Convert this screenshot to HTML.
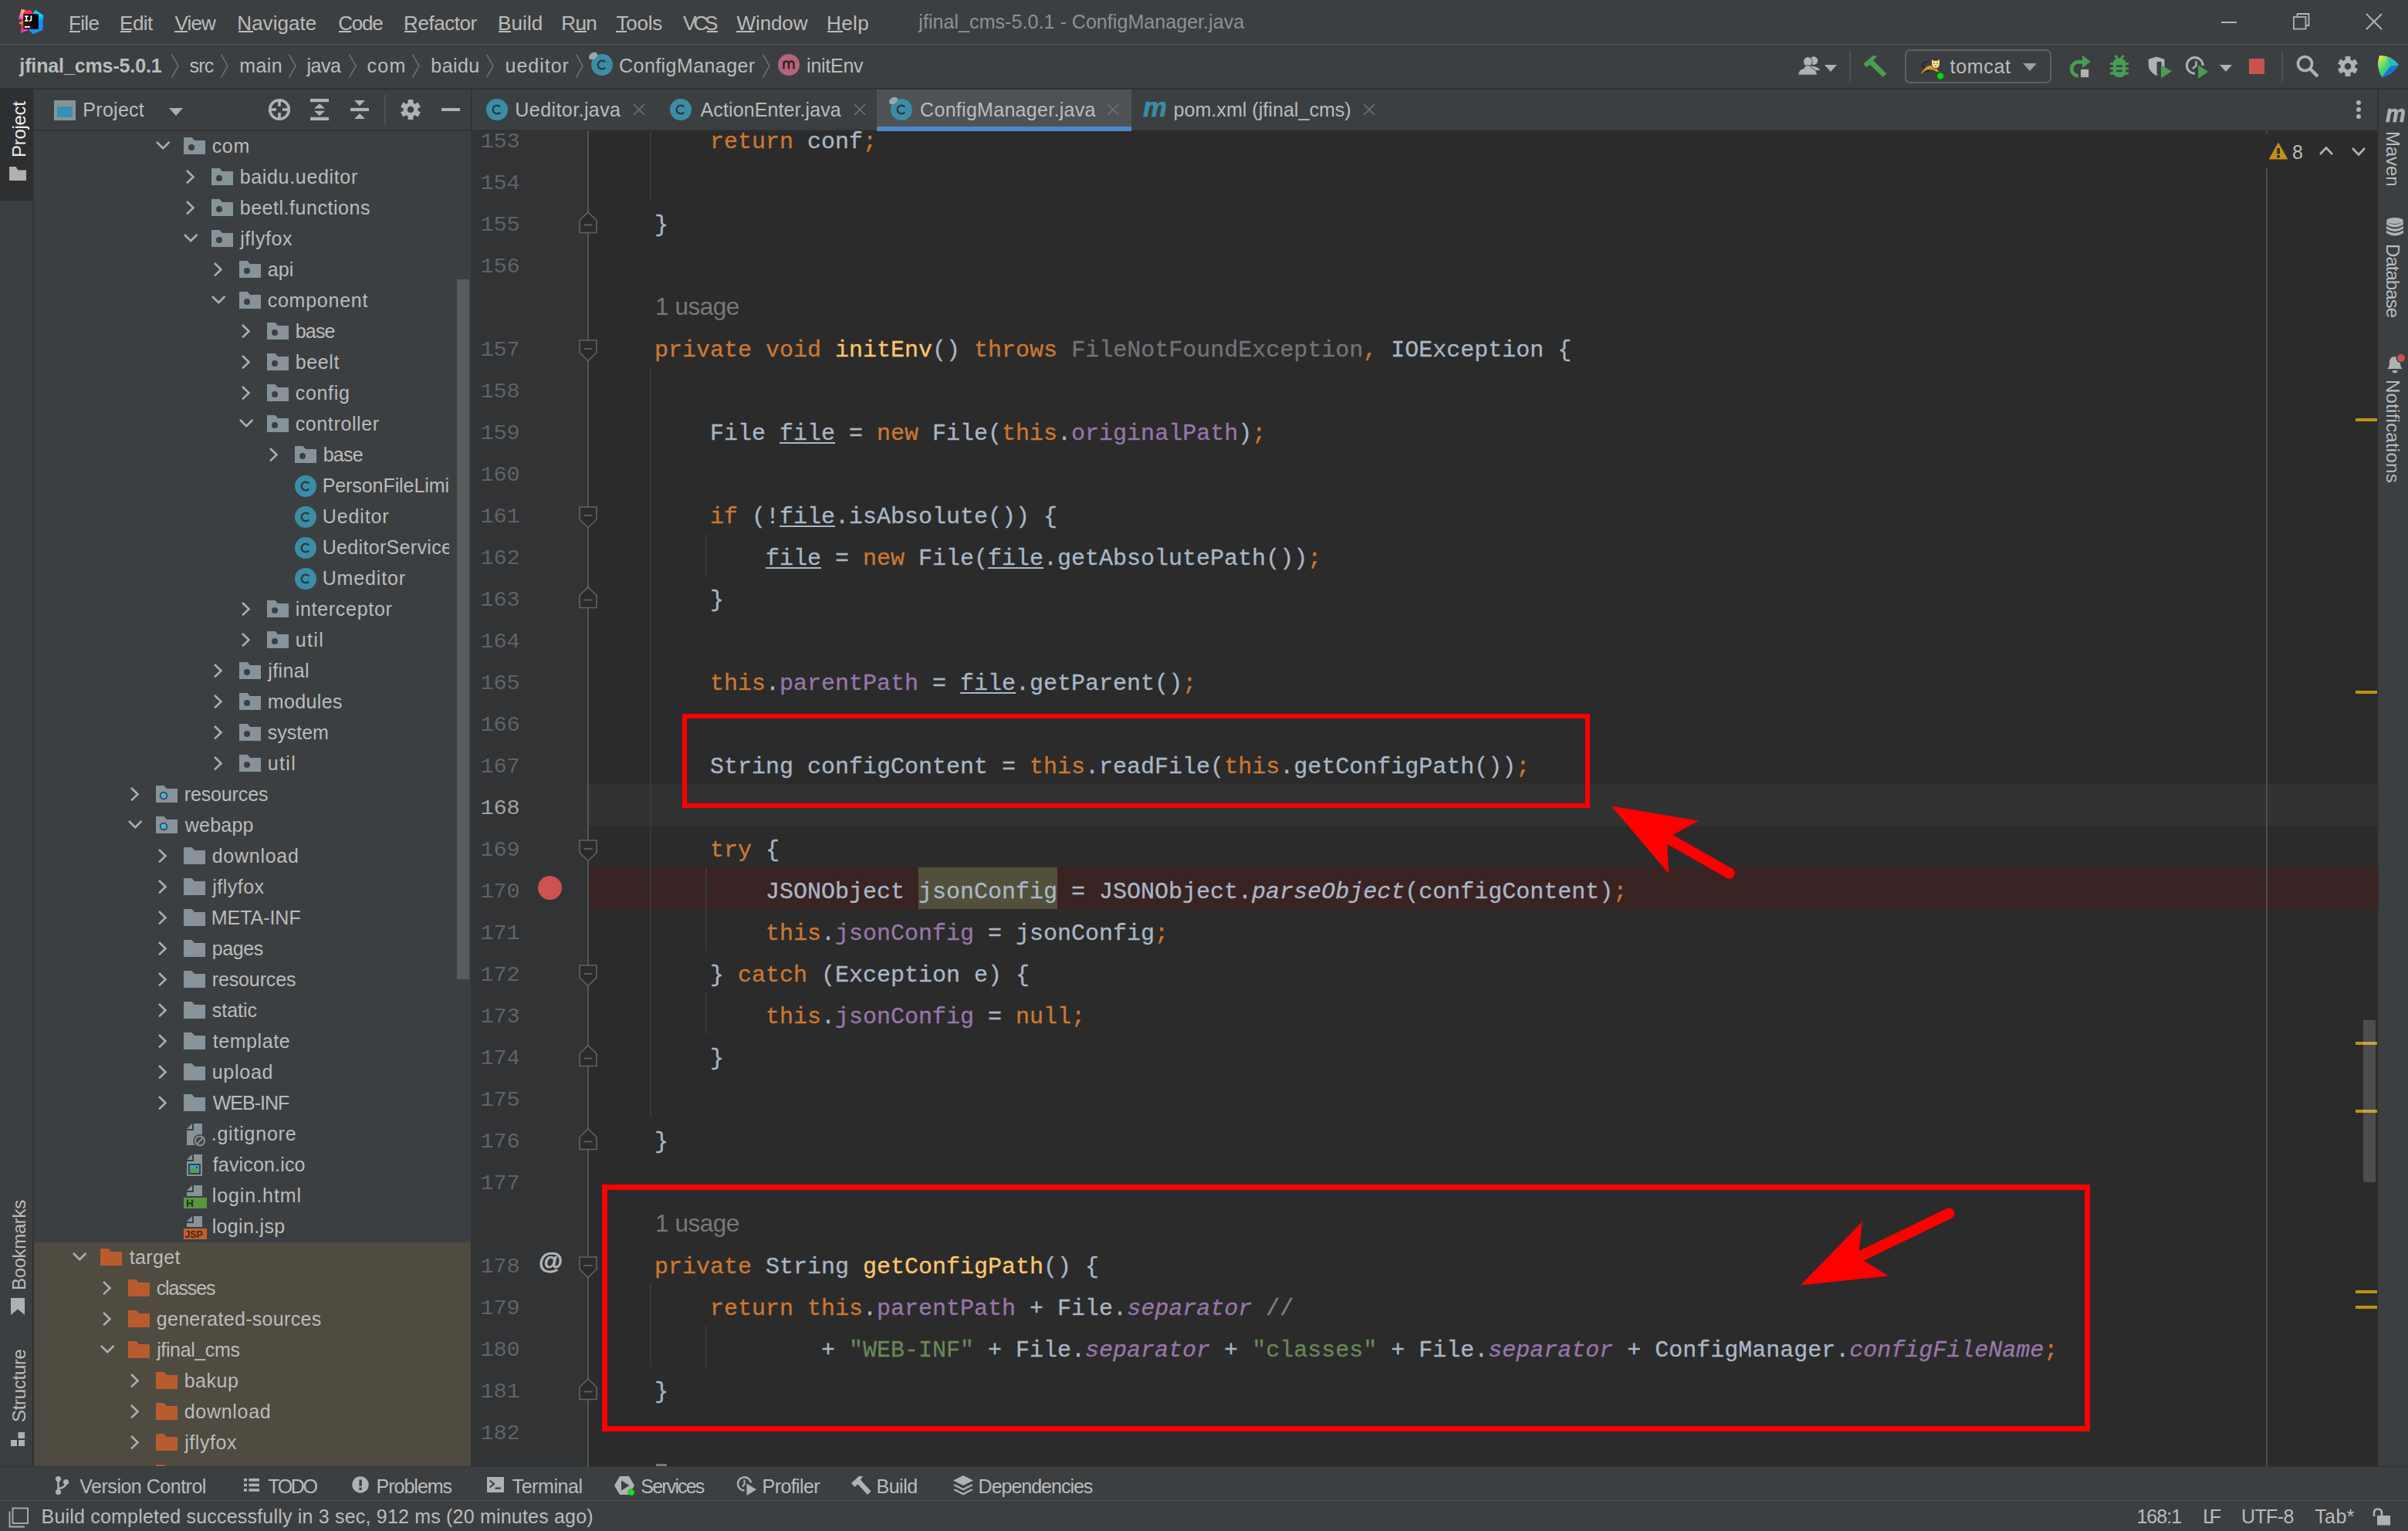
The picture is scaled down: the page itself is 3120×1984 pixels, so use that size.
<!DOCTYPE html><html><head><meta charset="utf-8"><title>jfinal_cms-5.0.1 - ConfigManager.java</title>
<style>
html,body{margin:0;padding:0;font-family:"Liberation Sans",sans-serif;}
body{width:3120px;height:1984px;overflow:hidden;background:#3c3f41;position:relative;font-family:"Liberation Sans",sans-serif;}
.r{position:absolute;display:block;}
.t{position:absolute;white-space:pre;font-family:"Liberation Sans",sans-serif;}
.c{position:absolute;white-space:pre;font-family:"Liberation Mono",monospace;font-size:30px;line-height:34px;color:#a9b7c6;left:776px;-webkit-text-stroke:0.3px;}
.k{color:#cc7832}.f{color:#9876aa}.m{color:#ffc66d}.s{color:#6a8759}.g{color:#808080}.u{color:#72737a}
.i{font-style:italic}.ul{text-decoration:underline;text-decoration-thickness:2px;text-underline-offset:2.5px}
.ln{position:absolute;font-family:"Liberation Mono",monospace;white-space:pre;}
</style></head><body>
<div class="r" style="left:0px;top:57px;width:3120px;height:1px;background:#545657;"></div>
<div class="r" style="left:0px;top:114px;width:3120px;height:2px;background:#2f3133;"></div>
<div class="r" style="left:0px;top:115px;width:42px;height:145px;background:#2d2f30;"></div>
<div class="r" style="left:42px;top:116px;width:2px;height:1785px;background:#323232;"></div>
<div class="r" style="left:44px;top:168px;width:566px;height:2px;background:#323232;"></div>
<div class="r" style="left:610px;top:170px;width:2471px;height:1731px;background:#2b2b2b;"></div>
<div class="r" style="left:610px;top:170px;width:152px;height:1731px;background:#313335;"></div>
<div class="r" style="left:610px;top:116px;width:2px;height:54px;background:#323232;"></div>
<div class="r" style="left:611px;top:168px;width:2470px;height:2px;background:#323232;"></div>
<div class="r" style="left:3080px;top:116px;width:2px;height:1785px;background:#323232;"></div>
<div class="r" style="left:0px;top:1900px;width:3120px;height:1px;background:#323232;"></div>
<div class="r" style="left:0px;top:1944px;width:3120px;height:1px;background:#4b4d4f;"></div>
<svg class="r" style="left:24px;top:11px;" width="33" height="34" viewBox="0 0 33 34"><defs>
<linearGradient id="lg1" x1="0.6" y1="0" x2="0.2" y2="1"><stop offset="0" stop-color="#ffd02e"/><stop offset="0.45" stop-color="#ff8fb0"/><stop offset="1" stop-color="#ff2fd0"/></linearGradient>
<linearGradient id="lg2" x1="0" y1="0" x2="0.4" y2="1"><stop offset="0" stop-color="#ffc400"/><stop offset="1" stop-color="#ff4a1c"/></linearGradient>
<linearGradient id="lg3" x1="0" y1="0" x2="1" y2="0.6"><stop offset="0" stop-color="#ff4536"/><stop offset="0.6" stop-color="#ff2bb5"/><stop offset="1" stop-color="#b44dff"/></linearGradient>
<linearGradient id="lg4" x1="0.5" y1="0" x2="0.5" y2="1"><stop offset="0" stop-color="#00d4ff"/><stop offset="0.25" stop-color="#08c8ff"/><stop offset="0.5" stop-color="#1488ff"/><stop offset="1" stop-color="#0aa0f0"/></linearGradient>
<linearGradient id="lg5" x1="0" y1="1" x2="1" y2="0"><stop offset="0" stop-color="#3a1c0a"/><stop offset="0.45" stop-color="#16060c"/><stop offset="1" stop-color="#000"/></linearGradient></defs>
<g transform="translate(0,0.5)"><path d="M3.9,0.2 L8.9,1.7 L8,7 L6.2,14.6 L0,12.7 Z" fill="url(#lg1)"/>
<path d="M8.9,1.7 L15.9,1.7 L18.9,5.9 L18,8 L6.2,8 L7,4 Z" fill="#ff2a6a"/>
<path d="M0.4,18.4 L6.2,14.6 L7,23 L4.6,21.5 Z" fill="url(#lg2)"/>
<path d="M4.6,21.2 L7,20 L7,25 L13.2,27.4 L2.4,31.4 Z" fill="url(#lg3)"/>
<path d="M18.9,5.9 L21.6,1.2 L32.1,8.4 L31.3,27.4 L18.9,32.6 L13.2,27.4 L20,20 Z" fill="url(#lg4)"/>
<path d="M21.6,1.2 L32.1,8.4 L26,10 Z" fill="#10e0ff" opacity="0.7"/>
<rect x="6.2" y="6.7" width="19.7" height="19.6" fill="url(#lg5)"/>
<rect x="7.9" y="22.4" width="7" height="1.9" fill="#fff"/>
<path d="M8,9.6 h4.6 M10.3,9.6 v5.8 M8,15.4 h4.6" stroke="#fff" stroke-width="1.7" fill="none"/><path d="M16.4,8.8 v4.6 q0,2.1 -2.2,2.1 h-0.6" stroke="#fff" stroke-width="1.7" fill="none"/></g></svg>
<span class="t" style="left:89.10px;top:14.80px;font-size:26px;line-height:30px;color:#bbbbbb;letter-spacing:-0.700px;">File</span>
<div class="r" style="left:90px;top:40px;width:14px;height:2px;background:#bbbbbb;"></div>
<span class="t" style="left:155.10px;top:14.80px;font-size:26px;line-height:30px;color:#bbbbbb;letter-spacing:-0.533px;">Edit</span>
<div class="r" style="left:156px;top:40px;width:14px;height:2px;background:#bbbbbb;"></div>
<span class="t" style="left:226.60px;top:14.80px;font-size:26px;line-height:30px;color:#bbbbbb;letter-spacing:-0.867px;">View</span>
<div class="r" style="left:226px;top:40px;width:17px;height:2px;background:#bbbbbb;"></div>
<span class="t" style="left:307.35px;top:14.80px;font-size:26px;line-height:30px;color:#bbbbbb;letter-spacing:0.021px;">Navigate</span>
<div class="r" style="left:309px;top:40px;width:19px;height:2px;background:#bbbbbb;"></div>
<span class="t" style="left:438.35px;top:14.80px;font-size:26px;line-height:30px;color:#bbbbbb;letter-spacing:-1.283px;">Code</span>
<div class="r" style="left:439px;top:40px;width:16px;height:2px;background:#bbbbbb;"></div>
<span class="t" style="left:523.10px;top:14.80px;font-size:26px;line-height:30px;color:#bbbbbb;letter-spacing:-0.443px;">Refactor</span>
<div class="r" style="left:524px;top:40px;width:16px;height:2px;background:#bbbbbb;"></div>
<span class="t" style="left:645.10px;top:14.80px;font-size:26px;line-height:30px;color:#bbbbbb;letter-spacing:0.100px;">Build</span>
<div class="r" style="left:646px;top:40px;width:16px;height:2px;background:#bbbbbb;"></div>
<span class="t" style="left:727.35px;top:14.80px;font-size:26px;line-height:30px;color:#bbbbbb;letter-spacing:-0.675px;">Run</span>
<div class="r" style="left:744px;top:40px;width:16px;height:2px;background:#bbbbbb;"></div>
<span class="t" style="left:798.60px;top:14.80px;font-size:26px;line-height:30px;color:#bbbbbb;letter-spacing:-0.275px;">Tools</span>
<div class="r" style="left:798px;top:40px;width:14px;height:2px;background:#bbbbbb;"></div>
<span class="t" style="left:885.10px;top:14.80px;font-size:26px;line-height:30px;color:#bbbbbb;letter-spacing:-4.050px;">VCS</span>
<div class="r" style="left:916px;top:40px;width:14px;height:2px;background:#bbbbbb;"></div>
<span class="t" style="left:954.60px;top:14.80px;font-size:26px;line-height:30px;color:#bbbbbb;letter-spacing:-0.120px;">Window</span>
<div class="r" style="left:954px;top:40px;width:24px;height:2px;background:#bbbbbb;"></div>
<span class="t" style="left:1071.10px;top:14.80px;font-size:26px;line-height:30px;color:#bbbbbb;letter-spacing:0.383px;">Help</span>
<div class="r" style="left:1072px;top:40px;width:20px;height:2px;background:#bbbbbb;"></div>
<span class="t" style="left:1190.35px;top:13.50px;font-size:25px;line-height:28px;color:#8e9092;letter-spacing:0.060px;">jfinal_cms-5.0.1 - ConfigManager.java</span>
<div class="r" style="left:2878px;top:28px;width:20px;height:2px;background:#b4b4b4;"></div>
<svg class="r" style="left:2971px;top:17px;" width="22" height="22" viewBox="0 0 22 22"><path d="M5.5,4.5 V1 H20.5 V16 H17" fill="none" stroke="#b4b4b4" stroke-width="1.8"/><rect x="1" y="5" width="15.5" height="15.5" fill="none" stroke="#b4b4b4" stroke-width="1.8"/></svg>
<svg class="r" style="left:3065px;top:17px;" width="22" height="22" viewBox="0 0 22 22"><path d="M1,1 L21,21 M21,1 L1,21" stroke="#b4b4b4" stroke-width="1.8"/></svg>
<span class="t" style="left:25.35px;top:70.80px;font-size:25px;line-height:28px;color:#bbbbbb;letter-spacing:-0.123px;font-weight:bold;">jfinal_cms-5.0.1</span>
<span class="t" style="left:245.60px;top:70.80px;font-size:25px;line-height:28px;color:#bbbbbb;letter-spacing:-0.800px;">src</span>
<span class="t" style="left:310.35px;top:70.80px;font-size:25px;line-height:28px;color:#bbbbbb;letter-spacing:0.383px;">main</span>
<span class="t" style="left:397.60px;top:70.80px;font-size:25px;line-height:28px;color:#bbbbbb;letter-spacing:-0.533px;">java</span>
<span class="t" style="left:475.60px;top:70.80px;font-size:25px;line-height:28px;color:#bbbbbb;letter-spacing:1.200px;">com</span>
<span class="t" style="left:558.35px;top:70.80px;font-size:25px;line-height:28px;color:#bbbbbb;letter-spacing:0.412px;">baidu</span>
<span class="t" style="left:654.60px;top:70.80px;font-size:25px;line-height:28px;color:#bbbbbb;letter-spacing:0.983px;">ueditor</span>
<span class="t" style="left:802.10px;top:70.80px;font-size:25px;line-height:28px;color:#bbbbbb;letter-spacing:0.429px;">ConfigManager</span>
<span class="t" style="left:1045.10px;top:70.80px;font-size:25px;line-height:28px;color:#bbbbbb;letter-spacing:-0.267px;">initEnv</span>
<svg class="r" style="left:221px;top:70px;" width="12" height="31" viewBox="0 0 12 31"><path d="M1.5,0.5 L10,15.5 L1.5,30.5" fill="none" stroke="#6b6d6f" stroke-width="1.6"/></svg>
<svg class="r" style="left:285px;top:70px;" width="12" height="31" viewBox="0 0 12 31"><path d="M1.5,0.5 L10,15.5 L1.5,30.5" fill="none" stroke="#6b6d6f" stroke-width="1.6"/></svg>
<svg class="r" style="left:373px;top:70px;" width="12" height="31" viewBox="0 0 12 31"><path d="M1.5,0.5 L10,15.5 L1.5,30.5" fill="none" stroke="#6b6d6f" stroke-width="1.6"/></svg>
<svg class="r" style="left:451px;top:70px;" width="12" height="31" viewBox="0 0 12 31"><path d="M1.5,0.5 L10,15.5 L1.5,30.5" fill="none" stroke="#6b6d6f" stroke-width="1.6"/></svg>
<svg class="r" style="left:533px;top:70px;" width="12" height="31" viewBox="0 0 12 31"><path d="M1.5,0.5 L10,15.5 L1.5,30.5" fill="none" stroke="#6b6d6f" stroke-width="1.6"/></svg>
<svg class="r" style="left:629px;top:70px;" width="12" height="31" viewBox="0 0 12 31"><path d="M1.5,0.5 L10,15.5 L1.5,30.5" fill="none" stroke="#6b6d6f" stroke-width="1.6"/></svg>
<svg class="r" style="left:745px;top:70px;" width="12" height="31" viewBox="0 0 12 31"><path d="M1.5,0.5 L10,15.5 L1.5,30.5" fill="none" stroke="#6b6d6f" stroke-width="1.6"/></svg>
<svg class="r" style="left:987px;top:70px;" width="12" height="31" viewBox="0 0 12 31"><path d="M1.5,0.5 L10,15.5 L1.5,30.5" fill="none" stroke="#6b6d6f" stroke-width="1.6"/></svg>
<svg class="r" style="left:766px;top:70px;" width="28" height="28" viewBox="0 0 28 28"><circle cx="14" cy="14" r="14" fill="#3b8da6"/><path d="M18.2,10.6 A5.4,5.4 0 1 0 18.2,17.4" fill="none" stroke="#263b44" stroke-width="2.4"/></svg><svg class="r" style="left:762px;top:67px;" width="14" height="12" viewBox="0 0 14 12"><ellipse cx="6.5" cy="5.5" rx="6" ry="4.2" transform="rotate(-35 6.5 5.5)" fill="#9aa7b0"/></svg>
<svg class="r" style="left:1008px;top:70px;" width="28" height="28" viewBox="0 0 28 28"><circle cx="14" cy="14" r="14" fill="#b4647a"/><path d="M7.5,19.5 V9.5 M7.5,13.5 Q7.5,9.5 10.8,9.5 Q14,9.5 14,13.5 V19.5 M14,13.5 Q14,9.5 17.3,9.5 Q20.5,9.5 20.5,13.5 V19.5" fill="none" stroke="#3d1f27" stroke-width="2.4"/></svg>
<svg class="r" style="left:2328px;top:72px;" width="32" height="27" viewBox="0 0 32 27"><g transform="translate(-2328,-72)"><circle cx="2350" cy="78.6" r="5.3" fill="#afb1b3"/><path d="M2347,85.5 Q2356.5,86.5 2358.2,91 H2347 Z" fill="#afb1b3"/><ellipse cx="2342.4" cy="80" rx="6.3" ry="6.8" fill="#3c3f41"/><ellipse cx="2342.4" cy="80" rx="5.4" ry="5.9" fill="#afb1b3"/><path d="M2329.8,97.2 Q2330.3,90 2337,88.6 L2339.5,85 H2345.3 L2348,88.6 Q2354,90 2354.5,97.2 Z" fill="#afb1b3" stroke="#3c3f41" stroke-width="1"/></g></svg>
<svg class="r" style="left:2364px;top:84px;" width="16" height="9" viewBox="0 0 16 9"><path d="M0,0 H16 L8,9 Z" fill="#afb1b3"/></svg>
<div class="r" style="left:2396px;top:66px;width:2px;height:40px;background:#515151;"></div>
<svg class="r" style="left:2412px;top:70px;" width="34" height="32" viewBox="0 0 34 32"><g transform="translate(-2412,-70)"><path d="M2414,83 L2426.5,72.2 L2432.3,72.2 L2427.3,78.6 L2444.4,95.5 L2439.7,100.1 L2423,83.9 L2418.4,87 Z" fill="#499c54"/></g></svg>
<div class="r" style="left:2468px;top:64px;width:186px;height:40px;border:2px solid #5e6062;border-radius:7px;"></div>
<svg class="r" style="left:2486px;top:74px;" width="36" height="32" viewBox="0 0 36 32"><g transform="translate(-2486,-74)"><path d="M2497.5,80.5 Q2490,80 2491.5,86 Q2493,91 2499,92.5" fill="none" stroke="#1a1a1a" stroke-width="1.3"/>
<path d="M2488.8,95.2 Q2494,86 2501,84.8 Q2508,85 2512.2,93.2 L2510,93.6 Q2505,89.5 2499.5,90 Q2493,91 2489.8,95.8 Z" fill="#d4a02c" stroke="#6b4a10" stroke-width="0.5"/>
<path d="M2502.4,76 L2505,78.2 L2510.6,78.2 L2513.6,76 L2513.4,83.5 Q2512.5,88.6 2508,88.8 Q2503.4,88.6 2502.6,83.5 Z" fill="#f4dc8c" stroke="#222" stroke-width="0.8"/><path d="M2505,82.2 h1.8 M2509.2,82.2 h1.8 M2507,85.5 h2" stroke="#5a4310" stroke-width="0.9"/>
<circle cx="2514.1" cy="98.4" r="4.6" fill="#0a9a0a"/><circle cx="2514.1" cy="98.4" r="3.5" fill="#00e400"/></g></svg>
<span class="t" style="left:2526.60px;top:72.00px;font-size:25px;line-height:28px;color:#bbbbbb;letter-spacing:0.680px;">tomcat</span>
<svg class="r" style="left:2621px;top:82px;" width="18" height="10" viewBox="0 0 18 10"><path d="M0,0 H18 L9,10 Z" fill="#9da0a2"/></svg>
<svg class="r" style="left:2681px;top:71px;" width="30" height="30" viewBox="0 0 30 30"><path d="M12,27.2 A8.9,8.9 0 0 1 12,9.4 H18" fill="none" stroke="#499c54" stroke-width="4.6"/><path d="M17,0.6 L27.8,8.9 L17,17.2 Z" fill="#499c54"/><rect x="15" y="18.9" width="10.2" height="10.2" fill="#afb1b3"/></svg>
<svg class="r" style="left:2733px;top:71px;" width="26" height="30" viewBox="0 0 26 30"><path d="M7.5,0.8 L11.7,6 M18.5,0.8 L14.3,6" stroke="#499c54" stroke-width="3" fill="none"/><path d="M4.8,10.5 Q4.8,4.8 13,4.8 Q21.2,4.8 21.2,10.5 V22 Q21.2,29.2 13,29.2 Q4.8,29.2 4.8,22 Z" fill="#499c54"/><rect x="1" y="10.2" width="24" height="2.7" fill="#499c54"/><rect x="1" y="16.4" width="24" height="2.7" fill="#499c54"/><rect x="1" y="22.6" width="24" height="3" fill="#499c54"/><rect x="9" y="13.4" width="8" height="2.5" fill="#3c3f41"/><rect x="9" y="19.6" width="8" height="2.5" fill="#3c3f41"/></svg>
<svg class="r" style="left:2783px;top:73px;" width="32" height="30" viewBox="0 0 32 30"><path d="M0.8,3.8 L11,0.6 L21.5,3.8 V12 Q21,20 11,25.2 Q1.4,20 0.8,12 Z" fill="#afb1b3"/><path d="M11.6,7 H17.6 V22 Q14,23.6 11.6,24 Z" fill="#3c3f41"/><path d="M17,10.9 L31,19.6 L17,28.3 Z" fill="#499c54"/></svg>
<svg class="r" style="left:2831px;top:72px;" width="32" height="32" viewBox="0 0 32 32"><path d="M23.2,12.9 A10.4,10.4 0 1 0 12.8,23.3" fill="none" stroke="#afb1b3" stroke-width="2.9"/><path d="M14.6,7.3 V13 L9.8,17.2" fill="none" stroke="#afb1b3" stroke-width="2.4"/><path d="M17.1,12.3 L30.3,21 L17.1,29.7 Z" fill="#499c54"/></svg>
<svg class="r" style="left:2876px;top:84px;" width="16" height="9" viewBox="0 0 16 9"><path d="M0,0 H16 L8,9 Z" fill="#afb1b3"/></svg>
<div class="r" style="left:2914px;top:76px;width:20px;height:20px;background:#c75450;"></div>
<div class="r" style="left:2956px;top:66px;width:2px;height:40px;background:#515151;"></div>
<svg class="r" style="left:2975px;top:71px;" width="30" height="30" viewBox="0 0 30 30"><circle cx="11.5" cy="11.5" r="9" fill="none" stroke="#afb1b3" stroke-width="3.6"/><path d="M18,18 L28,28" stroke="#afb1b3" stroke-width="4.2"/></svg>
<svg class="r" style="left:3028px;top:72px;" width="28" height="28" viewBox="0 0 28 28"><g transform="translate(14,14)"><rect x="-3.4" y="-13" width="6.8" height="7.80" rx="0.6" transform="rotate(0)" fill="#afb1b3"/><rect x="-3.4" y="-13" width="6.8" height="7.80" rx="0.6" transform="rotate(60)" fill="#afb1b3"/><rect x="-3.4" y="-13" width="6.8" height="7.80" rx="0.6" transform="rotate(120)" fill="#afb1b3"/><rect x="-3.4" y="-13" width="6.8" height="7.80" rx="0.6" transform="rotate(180)" fill="#afb1b3"/><rect x="-3.4" y="-13" width="6.8" height="7.80" rx="0.6" transform="rotate(240)" fill="#afb1b3"/><rect x="-3.4" y="-13" width="6.8" height="7.80" rx="0.6" transform="rotate(300)" fill="#afb1b3"/><circle r="9.36" fill="#afb1b3"/><circle r="4.29" fill="#3c3f41"/></g></svg>
<svg class="r" style="left:3080px;top:71px;" width="29" height="30" viewBox="0 0 29 30"><defs><linearGradient id="cg" x1="0" y1="0" x2="1" y2="1"><stop offset="0" stop-color="#f5f53a"/><stop offset="0.45" stop-color="#3fd07a"/><stop offset="1" stop-color="#16b5e8"/></linearGradient></defs>
<path d="M3,1 Q18,0 28,13 Q20,26 6,29 Q-2,15 3,1 Z" fill="url(#cg)"/><path d="M28,13 L17,15 L6,29 Q20,26 28,13 Z" fill="#1f6fd8"/><path d="M28,13 L17,15 L12,3 Q22,5 28,13 Z" fill="#22b8c8" opacity="0.8"/></svg>
<span class="t" style="left:10.60px;top:204.10px;font-size:24px;line-height:27px;color:#ececec;letter-spacing:-0.300px;transform-origin:0 0;transform:rotate(-90deg);">Project</span>
<svg class="r" style="left:12px;top:216px;" width="22" height="18" viewBox="0 0 22 18"><path d="M0,0 H8.5 L11.5,4.5 H22 V18 H0 Z" fill="#afb1b3"/></svg>
<span class="t" style="left:10.80px;top:1672.10px;font-size:24px;line-height:27px;color:#bbbbbb;letter-spacing:-0.362px;transform-origin:0 0;transform:rotate(-90deg);">Bookmarks</span>
<svg class="r" style="left:14px;top:1682px;" width="18" height="22" viewBox="0 0 18 22"><path d="M0,0 H18 V22 L9,14.5 L0,22 Z" fill="#afb1b3"/></svg>
<span class="t" style="left:10.80px;top:1843.10px;font-size:24px;line-height:27px;color:#bbbbbb;letter-spacing:-0.300px;transform-origin:0 0;transform:rotate(-90deg);">Structure</span>
<svg class="r" style="left:14px;top:1856px;" width="18" height="18" viewBox="0 0 18 18"><rect x="9.5" y="0" width="8.5" height="8" fill="#afb1b3"/><rect x="0" y="10" width="8" height="8" fill="#afb1b3"/><rect x="10" y="10" width="8" height="8" fill="#afb1b3"/></svg>
<span class="t" style="left:3090.71px;top:129.85px;font-family:'Liberation Sans';font-size:30.56px;line-height:34.13px;color:#afb1b3;transform-origin:0 0;transform:scaleX(0.9506);font-weight:bold;font-style:italic;-webkit-text-stroke:0.6px #afb1b3;">m</span>
<span class="t" style="left:3114.30px;top:170.00px;font-size:24px;line-height:27px;color:#bbbbbb;letter-spacing:-0.125px;transform-origin:0 0;transform:rotate(90deg);">Maven</span>
<svg class="r" style="left:3092px;top:282px;" width="22" height="24" viewBox="0 0 22 24"><ellipse cx="11" cy="4" rx="11" ry="4" fill="#afb1b3"/><path d="M0,5.5 Q11,12.5 22,5.5 V9.1 Q11,16.1 0,9.1 Z" fill="#afb1b3"/><path d="M0,11 Q11,18 22,11 V14.6 Q11,21.6 0,14.6 Z" fill="#afb1b3"/><path d="M0,16.5 Q11,23.5 22,16.5 V20.1 Q11,27.1 0,20.1 Z" fill="#afb1b3"/></svg>
<span class="t" style="left:3114.30px;top:316.20px;font-size:24px;line-height:27px;color:#bbbbbb;letter-spacing:-0.957px;transform-origin:0 0;transform:rotate(90deg);">Database</span>
<svg class="r" style="left:3091px;top:459px;" width="26" height="25" viewBox="0 0 26 25"><path d="M2,19 Q5,17 5,11 Q5,3 12,3 Q19,3 19,11 Q19,17 22,19 Z" fill="#afb1b3"/><path d="M8.5,21 H15.5 Q15,24.5 12,24.5 Q9,24.5 8.5,21 Z" fill="#afb1b3"/><circle cx="20" cy="5" r="6.5" fill="#3c3f41"/><circle cx="20" cy="5" r="5" fill="#c9524e"/></svg>
<span class="t" style="left:3114.30px;top:491.60px;font-size:24px;line-height:27px;color:#bbbbbb;letter-spacing:0.242px;transform-origin:0 0;transform:rotate(90deg);">Notifications</span>
<div class="r" style="left:70px;top:130px;width:28px;height:26px;background:#87939a;"></div>
<div class="r" style="left:74px;top:138px;width:20px;height:14px;background:#3592b4;"></div>
<span class="t" style="left:107.35px;top:128.30px;font-size:25px;line-height:28px;color:#bbbbbb;letter-spacing:0.275px;">Project</span>
<svg class="r" style="left:219px;top:140px;" width="18" height="10" viewBox="0 0 18 10"><path d="M0,0 H18 L9,10 Z" fill="#adadad"/></svg>
<svg class="r" style="left:347px;top:127px;" width="30" height="30" viewBox="0 0 30 30"><circle cx="15" cy="15" r="12.3" fill="none" stroke="#afb1b3" stroke-width="3.6"/><path d="M15,2 V11 M15,19 V28 M2,15 H11 M19,15 H28" stroke="#afb1b3" stroke-width="3.6"/></svg>
<svg class="r" style="left:402px;top:128px;" width="24" height="28" viewBox="0 0 24 28"><rect x="0" y="0" width="24" height="4.2" fill="#afb1b3"/><rect x="0" y="23.8" width="24" height="4.2" fill="#afb1b3"/><path d="M12,6.2 L19,12.5 H5 Z M12,22 L19,15.8 H5 Z" fill="#afb1b3"/></svg>
<svg class="r" style="left:454px;top:128px;" width="24" height="28" viewBox="0 0 24 28"><rect x="0" y="11.9" width="24" height="4.2" fill="#afb1b3"/><path d="M12,9.2 L19,2 H5 Z M12,19 L19,26 H5 Z" fill="#afb1b3"/></svg>
<div class="r" style="left:498px;top:123px;width:2px;height:39px;background:#515151;"></div>
<svg class="r" style="left:518px;top:128px;" width="28" height="28" viewBox="0 0 28 28"><g transform="translate(14,14)"><rect x="-3.4" y="-13" width="6.8" height="7.80" rx="0.6" transform="rotate(0)" fill="#afb1b3"/><rect x="-3.4" y="-13" width="6.8" height="7.80" rx="0.6" transform="rotate(60)" fill="#afb1b3"/><rect x="-3.4" y="-13" width="6.8" height="7.80" rx="0.6" transform="rotate(120)" fill="#afb1b3"/><rect x="-3.4" y="-13" width="6.8" height="7.80" rx="0.6" transform="rotate(180)" fill="#afb1b3"/><rect x="-3.4" y="-13" width="6.8" height="7.80" rx="0.6" transform="rotate(240)" fill="#afb1b3"/><rect x="-3.4" y="-13" width="6.8" height="7.80" rx="0.6" transform="rotate(300)" fill="#afb1b3"/><circle r="9.36" fill="#afb1b3"/><circle r="4.29" fill="#3c3f41"/></g></svg>
<div class="r" style="left:572px;top:140px;width:24px;height:4px;background:#afb1b3;"></div>
<div class="r" style="left:1136px;top:116px;width:330px;height:52px;background:#4e5254;"></div>
<div class="r" style="left:1136px;top:164px;width:330px;height:6px;background:#4a88c7;"></div>
<svg class="r" style="left:630px;top:128px;" width="28" height="28" viewBox="0 0 28 28"><circle cx="14" cy="14" r="14" fill="#3b8da6"/><path d="M18.2,10.6 A5.4,5.4 0 1 0 18.2,17.4" fill="none" stroke="#263b44" stroke-width="2.4"/></svg>
<span class="t" style="left:667.35px;top:128.30px;font-size:25px;line-height:28px;color:#bbbbbb;letter-spacing:0.423px;">Ueditor.java</span>
<svg class="r" style="left:820px;top:134px;" width="16" height="16" viewBox="0 0 16 16"><path d="M1,1 L15,15 M15,1 L1,15" stroke="#6e7072" stroke-width="1.7"/></svg>
<svg class="r" style="left:868px;top:128px;" width="28" height="28" viewBox="0 0 28 28"><circle cx="14" cy="14" r="14" fill="#3b8da6"/><path d="M18.2,10.6 A5.4,5.4 0 1 0 18.2,17.4" fill="none" stroke="#263b44" stroke-width="2.4"/></svg>
<span class="t" style="left:907.60px;top:128.30px;font-size:25px;line-height:28px;color:#bbbbbb;letter-spacing:0.093px;">ActionEnter.java</span>
<svg class="r" style="left:1106px;top:134px;" width="16" height="16" viewBox="0 0 16 16"><path d="M1,1 L15,15 M15,1 L1,15" stroke="#6e7072" stroke-width="1.7"/></svg>
<svg class="r" style="left:1154px;top:128px;" width="28" height="28" viewBox="0 0 28 28"><circle cx="14" cy="14" r="14" fill="#3b8da6"/><path d="M18.2,10.6 A5.4,5.4 0 1 0 18.2,17.4" fill="none" stroke="#263b44" stroke-width="2.4"/></svg><svg class="r" style="left:1151px;top:125px;" width="14" height="12" viewBox="0 0 14 12"><ellipse cx="6.5" cy="5.5" rx="6" ry="4.2" transform="rotate(-35 6.5 5.5)" fill="#9aa7b0"/></svg>
<span class="t" style="left:1192.10px;top:128.30px;font-size:25px;line-height:28px;color:#bbbbbb;letter-spacing:0.288px;">ConfigManager.java</span>
<svg class="r" style="left:1434px;top:134px;" width="16" height="16" viewBox="0 0 16 16"><path d="M1,1 L15,15 M15,1 L1,15" stroke="#6e7072" stroke-width="1.7"/></svg>
<span class="t" style="left:1481.25px;top:120.32px;font-family:'Liberation Sans';font-size:35.56px;line-height:39.72px;color:#3b8da6;transform-origin:0 0;transform:scaleX(0.9777);font-weight:bold;font-style:italic;-webkit-text-stroke:0.7px #3b8da6;">m</span>
<span class="t" style="left:1520.60px;top:128.30px;font-size:25px;line-height:28px;color:#bbbbbb;letter-spacing:0.047px;">pom.xml (jfinal_cms)</span>
<svg class="r" style="left:1766px;top:134px;" width="16" height="16" viewBox="0 0 16 16"><path d="M1,1 L15,15 M15,1 L1,15" stroke="#6e7072" stroke-width="1.7"/></svg>
<div class="r" style="left:3052.5px;top:130px;width:6.4px;height:6.4px;border-radius:50%;background:#afb1b3"></div>
<div class="r" style="left:3052.5px;top:139px;width:6.4px;height:6.4px;border-radius:50%;background:#afb1b3"></div>
<div class="r" style="left:3052.5px;top:148px;width:6.4px;height:6.4px;border-radius:50%;background:#afb1b3"></div>
<div class="r" style="left:44px;top:170px;width:566px;height:1730px;overflow:hidden;">
<div class="r" style="left:0px;top:1440px;width:566px;height:300px;background:#4f4b41;"></div>
<svg class="r" style="left:157px;top:12px;" width="21" height="13" viewBox="0 0 21 13"><path d="M2,2 L10.2,10.1 L18.4,2" fill="none" stroke="#adadad" stroke-width="2.6"/></svg>
<svg class="r" style="left:194px;top:8px;" width="28" height="22" viewBox="0 0 28 22"><path d="M0,0 H10.5 L14,4 H28 V22 H0 Z" fill="#87939a"/><circle cx="10" cy="13" r="4" fill="#3c3f41"/></svg>
<span class="t" style="left:230.70px;top:5.00px;font-size:25px;line-height:28px;color:#bbbbbb;letter-spacing:0.650px;">com</span>
<svg class="r" style="left:196px;top:49px;" width="14" height="21" viewBox="0 0 14 21"><path d="M2,2 L10.5,10.2 L2,18.4" fill="none" stroke="#adadad" stroke-width="2.6"/></svg>
<svg class="r" style="left:230px;top:48px;" width="28" height="22" viewBox="0 0 28 22"><path d="M0,0 H10.5 L14,4 H28 V22 H0 Z" fill="#87939a"/><circle cx="10" cy="13" r="4" fill="#3c3f41"/></svg>
<span class="t" style="left:266.70px;top:45.00px;font-size:25px;line-height:28px;color:#bbbbbb;letter-spacing:0.667px;">baidu.ueditor</span>
<svg class="r" style="left:196px;top:89px;" width="14" height="21" viewBox="0 0 14 21"><path d="M2,2 L10.5,10.2 L2,18.4" fill="none" stroke="#adadad" stroke-width="2.6"/></svg>
<svg class="r" style="left:230px;top:88px;" width="28" height="22" viewBox="0 0 28 22"><path d="M0,0 H10.5 L14,4 H28 V22 H0 Z" fill="#87939a"/><circle cx="10" cy="13" r="4" fill="#3c3f41"/></svg>
<span class="t" style="left:266.70px;top:85.00px;font-size:25px;line-height:28px;color:#bbbbbb;letter-spacing:0.536px;">beetl.functions</span>
<svg class="r" style="left:193px;top:132px;" width="21" height="13" viewBox="0 0 21 13"><path d="M2,2 L10.2,10.1 L18.4,2" fill="none" stroke="#adadad" stroke-width="2.6"/></svg>
<svg class="r" style="left:230px;top:128px;" width="28" height="22" viewBox="0 0 28 22"><path d="M0,0 H10.5 L14,4 H28 V22 H0 Z" fill="#87939a"/><circle cx="10" cy="13" r="4" fill="#3c3f41"/></svg>
<span class="t" style="left:267.20px;top:125.00px;font-size:25px;line-height:28px;color:#bbbbbb;letter-spacing:0.583px;">jflyfox</span>
<svg class="r" style="left:232px;top:169px;" width="14" height="21" viewBox="0 0 14 21"><path d="M2,2 L10.5,10.2 L2,18.4" fill="none" stroke="#adadad" stroke-width="2.6"/></svg>
<svg class="r" style="left:266px;top:168px;" width="28" height="22" viewBox="0 0 28 22"><path d="M0,0 H10.5 L14,4 H28 V22 H0 Z" fill="#87939a"/><circle cx="10" cy="13" r="4" fill="#3c3f41"/></svg>
<span class="t" style="left:302.70px;top:165.00px;font-size:25px;line-height:28px;color:#bbbbbb;letter-spacing:0.100px;">api</span>
<svg class="r" style="left:229px;top:212px;" width="21" height="13" viewBox="0 0 21 13"><path d="M2,2 L10.2,10.1 L18.4,2" fill="none" stroke="#adadad" stroke-width="2.6"/></svg>
<svg class="r" style="left:266px;top:208px;" width="28" height="22" viewBox="0 0 28 22"><path d="M0,0 H10.5 L14,4 H28 V22 H0 Z" fill="#87939a"/><circle cx="10" cy="13" r="4" fill="#3c3f41"/></svg>
<span class="t" style="left:302.70px;top:205.00px;font-size:25px;line-height:28px;color:#bbbbbb;letter-spacing:0.762px;">component</span>
<svg class="r" style="left:268px;top:249px;" width="14" height="21" viewBox="0 0 14 21"><path d="M2,2 L10.5,10.2 L2,18.4" fill="none" stroke="#adadad" stroke-width="2.6"/></svg>
<svg class="r" style="left:302px;top:248px;" width="28" height="22" viewBox="0 0 28 22"><path d="M0,0 H10.5 L14,4 H28 V22 H0 Z" fill="#87939a"/><circle cx="10" cy="13" r="4" fill="#3c3f41"/></svg>
<span class="t" style="left:338.70px;top:245.00px;font-size:25px;line-height:28px;color:#bbbbbb;letter-spacing:-0.800px;">base</span>
<svg class="r" style="left:268px;top:289px;" width="14" height="21" viewBox="0 0 14 21"><path d="M2,2 L10.5,10.2 L2,18.4" fill="none" stroke="#adadad" stroke-width="2.6"/></svg>
<svg class="r" style="left:302px;top:288px;" width="28" height="22" viewBox="0 0 28 22"><path d="M0,0 H10.5 L14,4 H28 V22 H0 Z" fill="#87939a"/><circle cx="10" cy="13" r="4" fill="#3c3f41"/></svg>
<span class="t" style="left:338.70px;top:285.00px;font-size:25px;line-height:28px;color:#bbbbbb;letter-spacing:0.625px;">beelt</span>
<svg class="r" style="left:268px;top:329px;" width="14" height="21" viewBox="0 0 14 21"><path d="M2,2 L10.5,10.2 L2,18.4" fill="none" stroke="#adadad" stroke-width="2.6"/></svg>
<svg class="r" style="left:302px;top:328px;" width="28" height="22" viewBox="0 0 28 22"><path d="M0,0 H10.5 L14,4 H28 V22 H0 Z" fill="#87939a"/><circle cx="10" cy="13" r="4" fill="#3c3f41"/></svg>
<span class="t" style="left:338.70px;top:325.00px;font-size:25px;line-height:28px;color:#bbbbbb;letter-spacing:0.700px;">config</span>
<svg class="r" style="left:265px;top:372px;" width="21" height="13" viewBox="0 0 21 13"><path d="M2,2 L10.2,10.1 L18.4,2" fill="none" stroke="#adadad" stroke-width="2.6"/></svg>
<svg class="r" style="left:302px;top:368px;" width="28" height="22" viewBox="0 0 28 22"><path d="M0,0 H10.5 L14,4 H28 V22 H0 Z" fill="#87939a"/><circle cx="10" cy="13" r="4" fill="#3c3f41"/></svg>
<span class="t" style="left:338.70px;top:365.00px;font-size:25px;line-height:28px;color:#bbbbbb;letter-spacing:0.622px;">controller</span>
<svg class="r" style="left:304px;top:409px;" width="14" height="21" viewBox="0 0 14 21"><path d="M2,2 L10.5,10.2 L2,18.4" fill="none" stroke="#adadad" stroke-width="2.6"/></svg>
<svg class="r" style="left:338px;top:408px;" width="28" height="22" viewBox="0 0 28 22"><path d="M0,0 H10.5 L14,4 H28 V22 H0 Z" fill="#87939a"/><circle cx="10" cy="13" r="4" fill="#3c3f41"/></svg>
<span class="t" style="left:374.70px;top:405.00px;font-size:25px;line-height:28px;color:#bbbbbb;letter-spacing:-0.767px;">base</span>
<svg class="r" style="left:338px;top:446px;" width="28" height="28" viewBox="0 0 28 28"><circle cx="14" cy="14" r="14" fill="#3b8da6"/><path d="M18.2,10.6 A5.4,5.4 0 1 0 18.2,17.4" fill="none" stroke="#263b44" stroke-width="2.4"/></svg>
<span class="t" style="left:373.70px;top:445.00px;font-size:25px;line-height:28px;color:#bbbbbb;letter-spacing:-0.077px;">PersonFileLimi</span>
<svg class="r" style="left:338px;top:486px;" width="28" height="28" viewBox="0 0 28 28"><circle cx="14" cy="14" r="14" fill="#3b8da6"/><path d="M18.2,10.6 A5.4,5.4 0 1 0 18.2,17.4" fill="none" stroke="#263b44" stroke-width="2.4"/></svg>
<span class="t" style="left:373.70px;top:485.00px;font-size:25px;line-height:28px;color:#bbbbbb;letter-spacing:0.900px;">Ueditor</span>
<svg class="r" style="left:338px;top:526px;" width="28" height="28" viewBox="0 0 28 28"><circle cx="14" cy="14" r="14" fill="#3b8da6"/><path d="M18.2,10.6 A5.4,5.4 0 1 0 18.2,17.4" fill="none" stroke="#263b44" stroke-width="2.4"/></svg>
<span class="t" style="left:373.70px;top:525.00px;font-size:25px;line-height:28px;color:#bbbbbb;letter-spacing:0.331px;">UeditorService</span>
<svg class="r" style="left:338px;top:566px;" width="28" height="28" viewBox="0 0 28 28"><circle cx="14" cy="14" r="14" fill="#3b8da6"/><path d="M18.2,10.6 A5.4,5.4 0 1 0 18.2,17.4" fill="none" stroke="#263b44" stroke-width="2.4"/></svg>
<span class="t" style="left:373.70px;top:565.00px;font-size:25px;line-height:28px;color:#bbbbbb;letter-spacing:0.857px;">Umeditor</span>
<svg class="r" style="left:268px;top:609px;" width="14" height="21" viewBox="0 0 14 21"><path d="M2,2 L10.5,10.2 L2,18.4" fill="none" stroke="#adadad" stroke-width="2.6"/></svg>
<svg class="r" style="left:302px;top:608px;" width="28" height="22" viewBox="0 0 28 22"><path d="M0,0 H10.5 L14,4 H28 V22 H0 Z" fill="#87939a"/><circle cx="10" cy="13" r="4" fill="#3c3f41"/></svg>
<span class="t" style="left:338.70px;top:605.00px;font-size:25px;line-height:28px;color:#bbbbbb;letter-spacing:0.710px;">interceptor</span>
<svg class="r" style="left:268px;top:649px;" width="14" height="21" viewBox="0 0 14 21"><path d="M2,2 L10.5,10.2 L2,18.4" fill="none" stroke="#adadad" stroke-width="2.6"/></svg>
<svg class="r" style="left:302px;top:648px;" width="28" height="22" viewBox="0 0 28 22"><path d="M0,0 H10.5 L14,4 H28 V22 H0 Z" fill="#87939a"/><circle cx="10" cy="13" r="4" fill="#3c3f41"/></svg>
<span class="t" style="left:338.70px;top:645.00px;font-size:25px;line-height:28px;color:#bbbbbb;letter-spacing:1.400px;">util</span>
<svg class="r" style="left:232px;top:689px;" width="14" height="21" viewBox="0 0 14 21"><path d="M2,2 L10.5,10.2 L2,18.4" fill="none" stroke="#adadad" stroke-width="2.6"/></svg>
<svg class="r" style="left:266px;top:688px;" width="28" height="22" viewBox="0 0 28 22"><path d="M0,0 H10.5 L14,4 H28 V22 H0 Z" fill="#87939a"/><circle cx="10" cy="13" r="4" fill="#3c3f41"/></svg>
<span class="t" style="left:303.20px;top:685.00px;font-size:25px;line-height:28px;color:#bbbbbb;letter-spacing:0.400px;">jfinal</span>
<svg class="r" style="left:232px;top:729px;" width="14" height="21" viewBox="0 0 14 21"><path d="M2,2 L10.5,10.2 L2,18.4" fill="none" stroke="#adadad" stroke-width="2.6"/></svg>
<svg class="r" style="left:266px;top:728px;" width="28" height="22" viewBox="0 0 28 22"><path d="M0,0 H10.5 L14,4 H28 V22 H0 Z" fill="#87939a"/><circle cx="10" cy="13" r="4" fill="#3c3f41"/></svg>
<span class="t" style="left:302.70px;top:725.00px;font-size:25px;line-height:28px;color:#bbbbbb;letter-spacing:0.400px;">modules</span>
<svg class="r" style="left:232px;top:769px;" width="14" height="21" viewBox="0 0 14 21"><path d="M2,2 L10.5,10.2 L2,18.4" fill="none" stroke="#adadad" stroke-width="2.6"/></svg>
<svg class="r" style="left:266px;top:768px;" width="28" height="22" viewBox="0 0 28 22"><path d="M0,0 H10.5 L14,4 H28 V22 H0 Z" fill="#87939a"/><circle cx="10" cy="13" r="4" fill="#3c3f41"/></svg>
<span class="t" style="left:302.70px;top:765.00px;font-size:25px;line-height:28px;color:#bbbbbb;letter-spacing:-0.000px;">system</span>
<svg class="r" style="left:232px;top:809px;" width="14" height="21" viewBox="0 0 14 21"><path d="M2,2 L10.5,10.2 L2,18.4" fill="none" stroke="#adadad" stroke-width="2.6"/></svg>
<svg class="r" style="left:266px;top:808px;" width="28" height="22" viewBox="0 0 28 22"><path d="M0,0 H10.5 L14,4 H28 V22 H0 Z" fill="#87939a"/><circle cx="10" cy="13" r="4" fill="#3c3f41"/></svg>
<span class="t" style="left:302.70px;top:805.00px;font-size:25px;line-height:28px;color:#bbbbbb;letter-spacing:1.367px;">util</span>
<svg class="r" style="left:124px;top:849px;" width="14" height="21" viewBox="0 0 14 21"><path d="M2,2 L10.5,10.2 L2,18.4" fill="none" stroke="#adadad" stroke-width="2.6"/></svg>
<svg class="r" style="left:158px;top:848px;" width="28" height="22" viewBox="0 0 28 22"><path d="M0,0 H10.5 L14,4 H28 V22 H0 Z" fill="#87939a"/><circle cx="10" cy="13" r="5.2" fill="#3c3f41"/><circle cx="10" cy="13" r="3.6" fill="#40b6e0"/></svg>
<span class="t" style="left:194.70px;top:845.00px;font-size:25px;line-height:28px;color:#bbbbbb;letter-spacing:-0.125px;">resources</span>
<svg class="r" style="left:121px;top:892px;" width="21" height="13" viewBox="0 0 21 13"><path d="M2,2 L10.2,10.1 L18.4,2" fill="none" stroke="#adadad" stroke-width="2.6"/></svg>
<svg class="r" style="left:158px;top:888px;" width="28" height="22" viewBox="0 0 28 22"><path d="M0,0 H10.5 L14,4 H28 V22 H0 Z" fill="#87939a"/><circle cx="10" cy="13" r="5.2" fill="#3c3f41"/><circle cx="10" cy="13" r="3.6" fill="#40b6e0"/></svg>
<span class="t" style="left:195.70px;top:885.00px;font-size:25px;line-height:28px;color:#bbbbbb;letter-spacing:0.240px;">webapp</span>
<svg class="r" style="left:160px;top:929px;" width="14" height="21" viewBox="0 0 14 21"><path d="M2,2 L10.5,10.2 L2,18.4" fill="none" stroke="#adadad" stroke-width="2.6"/></svg>
<svg class="r" style="left:194px;top:928px;" width="28" height="22" viewBox="0 0 28 22"><path d="M0,0 H10.5 L14,4 H28 V22 H0 Z" fill="#87939a"/></svg>
<span class="t" style="left:230.70px;top:925.00px;font-size:25px;line-height:28px;color:#bbbbbb;letter-spacing:0.743px;">download</span>
<svg class="r" style="left:160px;top:969px;" width="14" height="21" viewBox="0 0 14 21"><path d="M2,2 L10.5,10.2 L2,18.4" fill="none" stroke="#adadad" stroke-width="2.6"/></svg>
<svg class="r" style="left:194px;top:968px;" width="28" height="22" viewBox="0 0 28 22"><path d="M0,0 H10.5 L14,4 H28 V22 H0 Z" fill="#87939a"/></svg>
<span class="t" style="left:231.20px;top:965.00px;font-size:25px;line-height:28px;color:#bbbbbb;letter-spacing:0.500px;">jflyfox</span>
<svg class="r" style="left:160px;top:1009px;" width="14" height="21" viewBox="0 0 14 21"><path d="M2,2 L10.5,10.2 L2,18.4" fill="none" stroke="#adadad" stroke-width="2.6"/></svg>
<svg class="r" style="left:194px;top:1008px;" width="28" height="22" viewBox="0 0 28 22"><path d="M0,0 H10.5 L14,4 H28 V22 H0 Z" fill="#87939a"/></svg>
<span class="t" style="left:229.70px;top:1005.00px;font-size:25px;line-height:28px;color:#bbbbbb;letter-spacing:-0.029px;">META-INF</span>
<svg class="r" style="left:160px;top:1049px;" width="14" height="21" viewBox="0 0 14 21"><path d="M2,2 L10.5,10.2 L2,18.4" fill="none" stroke="#adadad" stroke-width="2.6"/></svg>
<svg class="r" style="left:194px;top:1048px;" width="28" height="22" viewBox="0 0 28 22"><path d="M0,0 H10.5 L14,4 H28 V22 H0 Z" fill="#87939a"/></svg>
<span class="t" style="left:230.70px;top:1045.00px;font-size:25px;line-height:28px;color:#bbbbbb;letter-spacing:-0.375px;">pages</span>
<svg class="r" style="left:160px;top:1089px;" width="14" height="21" viewBox="0 0 14 21"><path d="M2,2 L10.5,10.2 L2,18.4" fill="none" stroke="#adadad" stroke-width="2.6"/></svg>
<svg class="r" style="left:194px;top:1088px;" width="28" height="22" viewBox="0 0 28 22"><path d="M0,0 H10.5 L14,4 H28 V22 H0 Z" fill="#87939a"/></svg>
<span class="t" style="left:230.70px;top:1085.00px;font-size:25px;line-height:28px;color:#bbbbbb;letter-spacing:-0.113px;">resources</span>
<svg class="r" style="left:160px;top:1129px;" width="14" height="21" viewBox="0 0 14 21"><path d="M2,2 L10.5,10.2 L2,18.4" fill="none" stroke="#adadad" stroke-width="2.6"/></svg>
<svg class="r" style="left:194px;top:1128px;" width="28" height="22" viewBox="0 0 28 22"><path d="M0,0 H10.5 L14,4 H28 V22 H0 Z" fill="#87939a"/></svg>
<span class="t" style="left:230.70px;top:1125.00px;font-size:25px;line-height:28px;color:#bbbbbb;letter-spacing:-0.000px;">static</span>
<svg class="r" style="left:160px;top:1169px;" width="14" height="21" viewBox="0 0 14 21"><path d="M2,2 L10.5,10.2 L2,18.4" fill="none" stroke="#adadad" stroke-width="2.6"/></svg>
<svg class="r" style="left:194px;top:1168px;" width="28" height="22" viewBox="0 0 28 22"><path d="M0,0 H10.5 L14,4 H28 V22 H0 Z" fill="#87939a"/></svg>
<span class="t" style="left:231.70px;top:1165.00px;font-size:25px;line-height:28px;color:#bbbbbb;letter-spacing:0.571px;">template</span>
<svg class="r" style="left:160px;top:1209px;" width="14" height="21" viewBox="0 0 14 21"><path d="M2,2 L10.5,10.2 L2,18.4" fill="none" stroke="#adadad" stroke-width="2.6"/></svg>
<svg class="r" style="left:194px;top:1208px;" width="28" height="22" viewBox="0 0 28 22"><path d="M0,0 H10.5 L14,4 H28 V22 H0 Z" fill="#87939a"/></svg>
<span class="t" style="left:230.70px;top:1205.00px;font-size:25px;line-height:28px;color:#bbbbbb;letter-spacing:0.740px;">upload</span>
<svg class="r" style="left:160px;top:1249px;" width="14" height="21" viewBox="0 0 14 21"><path d="M2,2 L10.5,10.2 L2,18.4" fill="none" stroke="#adadad" stroke-width="2.6"/></svg>
<svg class="r" style="left:194px;top:1248px;" width="28" height="22" viewBox="0 0 28 22"><path d="M0,0 H10.5 L14,4 H28 V22 H0 Z" fill="#87939a"/></svg>
<span class="t" style="left:231.70px;top:1245.00px;font-size:25px;line-height:28px;color:#bbbbbb;letter-spacing:-1.000px;">WEB-INF</span>
<svg class="r" style="left:198px;top:1286px;" width="28" height="32" viewBox="0 0 28 32"><path d="M7,0 L0,7 H7 Z" fill="#87939a"/><path d="M9,0 H20 V28 H0 V9 H9 Z" fill="#87939a"/><circle cx="17" cy="22.5" r="8.6" fill="#3c3f41"/><circle cx="17" cy="22.5" r="6" fill="none" stroke="#87939a" stroke-width="2"/><path d="M12.8,26.7 L21.2,18.3" stroke="#87939a" stroke-width="2"/></svg>
<span class="t" style="left:229.70px;top:1285.00px;font-size:25px;line-height:28px;color:#bbbbbb;letter-spacing:0.789px;">.gitignore</span>
<svg class="r" style="left:198px;top:1326px;" width="20" height="28" viewBox="0 0 20 28"><path d="M7,0 L0,7 H7 Z" fill="#87939a"/><path d="M9,0 H20 V28 H0 V9 H9 Z" fill="#87939a"/><rect x="2" y="12" width="16" height="14" fill="#3c3f41"/><rect x="4" y="14" width="12" height="10" fill="#40a0c8"/><path d="M4,20 L9,17.5 L16,22 V24 H4 Z" fill="#5b9b47"/><rect x="12" y="16" width="2.2" height="2.2" fill="#3c3f41"/></svg>
<span class="t" style="left:231.70px;top:1325.00px;font-size:25px;line-height:28px;color:#bbbbbb;letter-spacing:0.170px;">favicon.ico</span>
<svg class="r" style="left:194px;top:1366px;" width="30" height="30" viewBox="0 0 30 30"><path d="M11,0 L4,7 H11 Z" fill="#87939a"/><path d="M13,0 H24 V14 H4 V9 H13 Z" fill="#87939a"/><rect x="0" y="16" width="30" height="14" fill="#5a9642"/><path d="M5,18.5 V28 M11,18.5 V28 M5,23.3 H11" stroke="#263b1c" stroke-width="2.3" fill="none"/></svg>
<span class="t" style="left:230.70px;top:1365.00px;font-size:25px;line-height:28px;color:#bbbbbb;letter-spacing:0.933px;">login.html</span>
<svg class="r" style="left:194px;top:1406px;" width="30" height="30" viewBox="0 0 30 30"><path d="M11,0 L4,7 H11 Z" fill="#87939a"/><path d="M13,0 H24 V14 H4 V9 H13 Z" fill="#87939a"/><rect x="0" y="16" width="30" height="14" fill="#c0602e"/><text x="1.6" y="28" font-family="Liberation Sans,sans-serif" font-weight="bold" font-size="12.5" fill="#4a2412" letter-spacing="-0.2">JSP</text></svg>
<span class="t" style="left:230.70px;top:1405.00px;font-size:25px;line-height:28px;color:#bbbbbb;letter-spacing:0.350px;">login.jsp</span>
<svg class="r" style="left:49px;top:1452px;" width="21" height="13" viewBox="0 0 21 13"><path d="M2,2 L10.2,10.1 L18.4,2" fill="none" stroke="#adadad" stroke-width="2.6"/></svg>
<svg class="r" style="left:86px;top:1448px;" width="28" height="22" viewBox="0 0 28 22"><path d="M0,0 H10.5 L14,4 H28 V22 H0 Z" fill="#b85c2e"/></svg>
<span class="t" style="left:123.70px;top:1445.00px;font-size:25px;line-height:28px;color:#bbbbbb;letter-spacing:0.380px;">target</span>
<svg class="r" style="left:88px;top:1489px;" width="14" height="21" viewBox="0 0 14 21"><path d="M2,2 L10.5,10.2 L2,18.4" fill="none" stroke="#adadad" stroke-width="2.6"/></svg>
<svg class="r" style="left:122px;top:1488px;" width="28" height="22" viewBox="0 0 28 22"><path d="M0,0 H10.5 L14,4 H28 V22 H0 Z" fill="#b85c2e"/></svg>
<span class="t" style="left:158.70px;top:1485.00px;font-size:25px;line-height:28px;color:#bbbbbb;letter-spacing:-1.100px;">classes</span>
<svg class="r" style="left:88px;top:1529px;" width="14" height="21" viewBox="0 0 14 21"><path d="M2,2 L10.5,10.2 L2,18.4" fill="none" stroke="#adadad" stroke-width="2.6"/></svg>
<svg class="r" style="left:122px;top:1528px;" width="28" height="22" viewBox="0 0 28 22"><path d="M0,0 H10.5 L14,4 H28 V22 H0 Z" fill="#b85c2e"/></svg>
<span class="t" style="left:158.70px;top:1525.00px;font-size:25px;line-height:28px;color:#bbbbbb;letter-spacing:0.319px;">generated-sources</span>
<svg class="r" style="left:85px;top:1572px;" width="21" height="13" viewBox="0 0 21 13"><path d="M2,2 L10.2,10.1 L18.4,2" fill="none" stroke="#adadad" stroke-width="2.6"/></svg>
<svg class="r" style="left:122px;top:1568px;" width="28" height="22" viewBox="0 0 28 22"><path d="M0,0 H10.5 L14,4 H28 V22 H0 Z" fill="#b85c2e"/></svg>
<span class="t" style="left:159.20px;top:1565.00px;font-size:25px;line-height:28px;color:#bbbbbb;letter-spacing:-0.378px;">jfinal_cms</span>
<svg class="r" style="left:124px;top:1609px;" width="14" height="21" viewBox="0 0 14 21"><path d="M2,2 L10.5,10.2 L2,18.4" fill="none" stroke="#adadad" stroke-width="2.6"/></svg>
<svg class="r" style="left:158px;top:1608px;" width="28" height="22" viewBox="0 0 28 22"><path d="M0,0 H10.5 L14,4 H28 V22 H0 Z" fill="#b85c2e"/></svg>
<span class="t" style="left:194.70px;top:1605.00px;font-size:25px;line-height:28px;color:#bbbbbb;letter-spacing:0.500px;">bakup</span>
<svg class="r" style="left:124px;top:1649px;" width="14" height="21" viewBox="0 0 14 21"><path d="M2,2 L10.5,10.2 L2,18.4" fill="none" stroke="#adadad" stroke-width="2.6"/></svg>
<svg class="r" style="left:158px;top:1648px;" width="28" height="22" viewBox="0 0 28 22"><path d="M0,0 H10.5 L14,4 H28 V22 H0 Z" fill="#b85c2e"/></svg>
<span class="t" style="left:194.70px;top:1645.00px;font-size:25px;line-height:28px;color:#bbbbbb;letter-spacing:0.714px;">download</span>
<svg class="r" style="left:124px;top:1689px;" width="14" height="21" viewBox="0 0 14 21"><path d="M2,2 L10.5,10.2 L2,18.4" fill="none" stroke="#adadad" stroke-width="2.6"/></svg>
<svg class="r" style="left:158px;top:1688px;" width="28" height="22" viewBox="0 0 28 22"><path d="M0,0 H10.5 L14,4 H28 V22 H0 Z" fill="#b85c2e"/></svg>
<span class="t" style="left:195.20px;top:1685.00px;font-size:25px;line-height:28px;color:#bbbbbb;letter-spacing:0.550px;">jflyfox</span>
<svg class="r" style="left:124px;top:1729px;" width="14" height="21" viewBox="0 0 14 21"><path d="M2,2 L10.5,10.2 L2,18.4" fill="none" stroke="#adadad" stroke-width="2.6"/></svg>
<svg class="r" style="left:158px;top:1728px;" width="28" height="22" viewBox="0 0 28 22"><path d="M0,0 H10.5 L14,4 H28 V22 H0 Z" fill="#b85c2e"/></svg>
<span class="t" style="left:193.70px;top:1725.00px;font-size:25px;line-height:28px;color:#bbbbbb;letter-spacing:0.576px;">META-INF</span>
<div class="r" style="left:538px;top:0px;width:30px;height:1730px;background:transparent;"></div>
</div>
<div class="r" style="left:582px;top:610px;width:27px;height:40px;background:#3c3f41;"></div>
<div class="r" style="left:582px;top:690px;width:27px;height:40px;background:#3c3f41;"></div>
<div class="r" style="left:592px;top:362px;width:16px;height:907px;background:#595b5d;"></div>
<div class="r" style="left:763px;top:1016px;width:2318px;height:54px;background:#323232;"></div>
<div class="r" style="left:763px;top:1124px;width:2318px;height:54px;background:#3a2323;"></div>
<div class="r" style="left:1190px;top:1124px;width:180px;height:54px;background:#52503a;"></div>
<div class="r" style="left:761px;top:170px;width:2px;height:1731px;background:#555555;"></div>
<div class="r" style="left:2936px;top:170px;width:2px;height:1731px;background:#4c4c4c;"></div>
<div class="r" style="left:842px;top:170px;width:2px;height:90px;background:#393939;"></div>
<div class="r" style="left:842px;top:476px;width:2px;height:972px;background:#393939;"></div>
<div class="r" style="left:842px;top:1664px;width:2px;height:108px;background:#393939;"></div>
<div class="r" style="left:914px;top:692px;width:2px;height:54px;background:#393939;"></div>
<div class="r" style="left:914px;top:1124px;width:2px;height:108px;background:#393939;"></div>
<div class="r" style="left:914px;top:1286px;width:2px;height:54px;background:#393939;"></div>
<div class="r" style="left:914px;top:1718px;width:2px;height:54px;background:#393939;"></div>
<div class="c" style="top:166.5px;padding-left:144px"><span class="k">return</span> conf<span class="k">;</span></div>
<span class="ln" style="left:622.4px;top:169.1px;font-size:28.5px;line-height:30px;color:#606366;letter-spacing:0px">153</span>
<span class="ln" style="left:622.4px;top:223.1px;font-size:28.5px;line-height:30px;color:#606366;letter-spacing:0px">154</span>
<div class="c" style="top:274.5px;padding-left:72px">}</div>
<span class="ln" style="left:622.4px;top:277.1px;font-size:28.5px;line-height:30px;color:#606366;letter-spacing:0px">155</span>
<span class="ln" style="left:622.4px;top:331.1px;font-size:28.5px;line-height:30px;color:#606366;letter-spacing:0px">156</span>
<span class="t" style="left:849.10px;top:379.30px;font-size:31.5px;line-height:36px;color:#787878;letter-spacing:-0.467px;">1 usage</span>
<div class="c" style="top:436.5px;padding-left:72px"><span class="k">private void </span><span class="m">initEnv</span>() <span class="k">throws </span><span class="u">FileNotFoundException</span><span class="k">,</span> IOException {</div>
<span class="ln" style="left:622.4px;top:439.1px;font-size:28.5px;line-height:30px;color:#606366;letter-spacing:0px">157</span>
<span class="ln" style="left:622.4px;top:493.1px;font-size:28.5px;line-height:30px;color:#606366;letter-spacing:0px">158</span>
<div class="c" style="top:544.5px;padding-left:144px">File <span class="ul">file</span> = <span class="k">new </span>File(<span class="k">this</span>.<span class="f">originalPath</span>)<span class="k">;</span></div>
<span class="ln" style="left:622.4px;top:547.1px;font-size:28.5px;line-height:30px;color:#606366;letter-spacing:0px">159</span>
<span class="ln" style="left:622.4px;top:601.1px;font-size:28.5px;line-height:30px;color:#606366;letter-spacing:0px">160</span>
<div class="c" style="top:652.5px;padding-left:144px"><span class="k">if </span>(!<span class="ul">file</span>.isAbsolute()) {</div>
<span class="ln" style="left:622.4px;top:655.1px;font-size:28.5px;line-height:30px;color:#606366;letter-spacing:0px">161</span>
<div class="c" style="top:706.5px;padding-left:216px"><span class="ul">file</span> = <span class="k">new </span>File(<span class="ul">file</span>.getAbsolutePath())<span class="k">;</span></div>
<span class="ln" style="left:622.4px;top:709.1px;font-size:28.5px;line-height:30px;color:#606366;letter-spacing:0px">162</span>
<div class="c" style="top:760.5px;padding-left:144px">}</div>
<span class="ln" style="left:622.4px;top:763.1px;font-size:28.5px;line-height:30px;color:#606366;letter-spacing:0px">163</span>
<span class="ln" style="left:622.4px;top:817.1px;font-size:28.5px;line-height:30px;color:#606366;letter-spacing:0px">164</span>
<div class="c" style="top:868.5px;padding-left:144px"><span class="k">this</span>.<span class="f">parentPath</span> = <span class="ul">file</span>.getParent()<span class="k">;</span></div>
<span class="ln" style="left:622.4px;top:871.1px;font-size:28.5px;line-height:30px;color:#606366;letter-spacing:0px">165</span>
<span class="ln" style="left:622.4px;top:925.1px;font-size:28.5px;line-height:30px;color:#606366;letter-spacing:0px">166</span>
<div class="c" style="top:976.5px;padding-left:144px">String configContent = <span class="k">this</span>.readFile(<span class="k">this</span>.getConfigPath())<span class="k">;</span></div>
<span class="ln" style="left:622.4px;top:979.1px;font-size:28.5px;line-height:30px;color:#606366;letter-spacing:0px">167</span>
<span class="ln" style="left:622.4px;top:1033.1px;font-size:28.5px;line-height:30px;color:#a4a3a3;letter-spacing:0px">168</span>
<div class="c" style="top:1084.5px;padding-left:144px"><span class="k">try </span>{</div>
<span class="ln" style="left:622.4px;top:1087.1px;font-size:28.5px;line-height:30px;color:#606366;letter-spacing:0px">169</span>
<div class="c" style="top:1138.5px;padding-left:216px">JSONObject jsonConfig = JSONObject.<span class="i">parseObject</span>(configContent)<span class="k">;</span></div>
<span class="ln" style="left:622.4px;top:1141.1px;font-size:28.5px;line-height:30px;color:#606366;letter-spacing:0px">170</span>
<div class="c" style="top:1192.5px;padding-left:216px"><span class="k">this</span>.<span class="f">jsonConfig</span> = jsonConfig<span class="k">;</span></div>
<span class="ln" style="left:622.4px;top:1195.1px;font-size:28.5px;line-height:30px;color:#606366;letter-spacing:0px">171</span>
<div class="c" style="top:1246.5px;padding-left:144px">} <span class="k">catch </span>(Exception e) {</div>
<span class="ln" style="left:622.4px;top:1249.1px;font-size:28.5px;line-height:30px;color:#606366;letter-spacing:0px">172</span>
<div class="c" style="top:1300.5px;padding-left:216px"><span class="k">this</span>.<span class="f">jsonConfig</span> = <span class="k">null;</span></div>
<span class="ln" style="left:622.4px;top:1303.1px;font-size:28.5px;line-height:30px;color:#606366;letter-spacing:0px">173</span>
<div class="c" style="top:1354.5px;padding-left:144px">}</div>
<span class="ln" style="left:622.4px;top:1357.1px;font-size:28.5px;line-height:30px;color:#606366;letter-spacing:0px">174</span>
<span class="ln" style="left:622.4px;top:1411.1px;font-size:28.5px;line-height:30px;color:#606366;letter-spacing:0px">175</span>
<div class="c" style="top:1462.5px;padding-left:72px">}</div>
<span class="ln" style="left:622.4px;top:1465.1px;font-size:28.5px;line-height:30px;color:#606366;letter-spacing:0px">176</span>
<span class="ln" style="left:622.4px;top:1519.1px;font-size:28.5px;line-height:30px;color:#606366;letter-spacing:0px">177</span>
<span class="t" style="left:849.10px;top:1567.30px;font-size:31.5px;line-height:36px;color:#787878;letter-spacing:-0.467px;">1 usage</span>
<div class="c" style="top:1624.5px;padding-left:72px"><span class="k">private </span>String <span class="m">getConfigPath</span>() {</div>
<span class="ln" style="left:622.4px;top:1627.1px;font-size:28.5px;line-height:30px;color:#606366;letter-spacing:0px">178</span>
<div class="c" style="top:1678.5px;padding-left:144px"><span class="k">return this</span>.<span class="f">parentPath</span> + File.<span class="f i">separator</span> <span class="g">//</span></div>
<span class="ln" style="left:622.4px;top:1681.1px;font-size:28.5px;line-height:30px;color:#606366;letter-spacing:0px">179</span>
<div class="c" style="top:1732.5px;padding-left:288px">+ <span class="s">"WEB-INF"</span> + File.<span class="f i">separator</span> + <span class="s">"classes"</span> + File.<span class="f i">separator</span> + ConfigManager.<span class="f i">configFileName</span><span class="k">;</span></div>
<span class="ln" style="left:622.4px;top:1735.1px;font-size:28.5px;line-height:30px;color:#606366;letter-spacing:0px">180</span>
<div class="c" style="top:1786.5px;padding-left:72px">}</div>
<span class="ln" style="left:622.4px;top:1789.1px;font-size:28.5px;line-height:30px;color:#606366;letter-spacing:0px">181</span>
<span class="ln" style="left:622.4px;top:1843.1px;font-size:28.5px;line-height:30px;color:#606366;letter-spacing:0px">182</span>
<svg class="r" style="left:750px;top:274px;" width="24" height="29" viewBox="0 0 24 29"><path d="M1,27.5 H23 V11.5 L12,1 L1,11.5 Z" fill="#2b2b2b" stroke="#606366" stroke-width="1.6"/><path d="M6.5,17.5 H17.5" stroke="#606366" stroke-width="1.8"/></svg>
<svg class="r" style="left:750px;top:440px;" width="24" height="29" viewBox="0 0 24 29"><path d="M1,1 H23 V17 L12,27.5 L1,17 Z" fill="#2b2b2b" stroke="#606366" stroke-width="1.6"/><path d="M6.5,12 H17.5" stroke="#606366" stroke-width="1.8"/></svg>
<svg class="r" style="left:750px;top:656px;" width="24" height="29" viewBox="0 0 24 29"><path d="M1,1 H23 V17 L12,27.5 L1,17 Z" fill="#2b2b2b" stroke="#606366" stroke-width="1.6"/><path d="M6.5,12 H17.5" stroke="#606366" stroke-width="1.8"/></svg>
<svg class="r" style="left:750px;top:760px;" width="24" height="29" viewBox="0 0 24 29"><path d="M1,27.5 H23 V11.5 L12,1 L1,11.5 Z" fill="#2b2b2b" stroke="#606366" stroke-width="1.6"/><path d="M6.5,17.5 H17.5" stroke="#606366" stroke-width="1.8"/></svg>
<svg class="r" style="left:750px;top:1088px;" width="24" height="29" viewBox="0 0 24 29"><path d="M1,1 H23 V17 L12,27.5 L1,17 Z" fill="#2b2b2b" stroke="#606366" stroke-width="1.6"/><path d="M6.5,12 H17.5" stroke="#606366" stroke-width="1.8"/></svg>
<svg class="r" style="left:750px;top:1250px;" width="24" height="29" viewBox="0 0 24 29"><path d="M1,1 H23 V17 L12,27.5 L1,17 Z" fill="#2b2b2b" stroke="#606366" stroke-width="1.6"/><path d="M6.5,12 H17.5" stroke="#606366" stroke-width="1.8"/></svg>
<svg class="r" style="left:750px;top:1354px;" width="24" height="29" viewBox="0 0 24 29"><path d="M1,27.5 H23 V11.5 L12,1 L1,11.5 Z" fill="#2b2b2b" stroke="#606366" stroke-width="1.6"/><path d="M6.5,17.5 H17.5" stroke="#606366" stroke-width="1.8"/></svg>
<svg class="r" style="left:750px;top:1462px;" width="24" height="29" viewBox="0 0 24 29"><path d="M1,27.5 H23 V11.5 L12,1 L1,11.5 Z" fill="#2b2b2b" stroke="#606366" stroke-width="1.6"/><path d="M6.5,17.5 H17.5" stroke="#606366" stroke-width="1.8"/></svg>
<svg class="r" style="left:750px;top:1628px;" width="24" height="29" viewBox="0 0 24 29"><path d="M1,1 H23 V17 L12,27.5 L1,17 Z" fill="#2b2b2b" stroke="#606366" stroke-width="1.6"/><path d="M6.5,12 H17.5" stroke="#606366" stroke-width="1.8"/></svg>
<svg class="r" style="left:750px;top:1786px;" width="24" height="29" viewBox="0 0 24 29"><path d="M1,27.5 H23 V11.5 L12,1 L1,11.5 Z" fill="#2b2b2b" stroke="#606366" stroke-width="1.6"/><path d="M6.5,17.5 H17.5" stroke="#606366" stroke-width="1.8"/></svg>
<div class="r" style="left:697.2px;top:1135.1px;width:31px;height:31px;border-radius:50%;background:#cb5450"></div>
<span class="t" style="left:697.60px;top:1618.25px;font-family:'Liberation Sans';font-size:31.03px;line-height:34.67px;color:#b4b6b8;transform-origin:0 0;transform:scaleX(1.0296);font-weight:bold;-webkit-text-stroke:0.7px #b4b6b8;">@</span>
<div class="r" style="left:2930px;top:174px;width:150px;height:44px;background:#2b2b2b;"></div>
<svg class="r" style="left:2939px;top:184px;" width="26" height="23" viewBox="0 0 26 23"><path d="M13,0.5 L25.5,22.5 H0.5 Z" fill="#c29018"/><rect x="11.3" y="8" width="3.6" height="7.5" fill="#2b2b2b"/><rect x="11.3" y="17" width="3.6" height="3.4" fill="#2b2b2b"/></svg>
<span class="t" style="left:2970.10px;top:183.30px;font-size:25px;line-height:28px;color:#bbbbbb;letter-spacing:0.000px;">8</span>
<svg class="r" style="left:3004px;top:188px;" width="20" height="14" viewBox="0 0 20 14"><path d="M2,12 L10,3.5 L18,12" fill="none" stroke="#afb1b3" stroke-width="2.6"/></svg>
<svg class="r" style="left:3046px;top:190px;" width="20" height="14" viewBox="0 0 20 14"><path d="M2,2 L10,10.5 L18,2" fill="none" stroke="#afb1b3" stroke-width="2.6"/></svg>
<div class="r" style="left:3052px;top:542px;width:28px;height:4px;background:#be9117;"></div>
<div class="r" style="left:3052px;top:895px;width:28px;height:4px;background:#be9117;"></div>
<div class="r" style="left:3052px;top:1350px;width:28px;height:4px;background:#be9117;"></div>
<div class="r" style="left:3052px;top:1438px;width:28px;height:4px;background:#be9117;"></div>
<div class="r" style="left:3052px;top:1672px;width:28px;height:4px;background:#be9117;"></div>
<div class="r" style="left:3052px;top:1692px;width:28px;height:4px;background:#be9117;"></div>
<div class="r" style="left:3062px;top:1322px;width:16px;height:210px;background:rgba(255,255,255,0.165);"></div>
<div class="r" style="left:850px;top:1897px;width:14px;height:3px;background:#787878;"></div>
<div class="r" style="left:884px;top:925px;width:1164px;height:110px;border:6px solid #ff0000;"></div>
<div class="r" style="left:780px;top:1535px;width:1914px;height:306px;border:7px solid #ff0000;"></div>
<svg class="r" style="left:2080px;top:1036px;" width="180" height="110" viewBox="0 0 180 110"><g transform="translate(-2080,-1036)"><path d="M2164,1088 L2240.8,1131.7" stroke="#ff0000" stroke-width="14" stroke-linecap="round"/><path d="M2087.8,1044.6 L2200.9,1063.7 L2167.9,1081.8 L2160.2,1094.2 L2162,1131.9 Z" fill="#ff0000"/></g></svg>
<svg class="r" style="left:2320px;top:1555px;" width="230" height="125" viewBox="0 0 230 125"><g transform="translate(-2320,-1555)"><path d="M2412,1627.3 L2525.4,1572.4" stroke="#ff0000" stroke-width="14" stroke-linecap="round"/><path d="M2332.9,1665.6 L2412.8,1583.2 L2408.8,1620.8 L2415.3,1633.7 L2446.8,1653.6 Z" fill="#ff0000"/></g></svg>
<svg class="r" style="left:71px;top:1912px;" width="19" height="26" viewBox="0 0 19 26"><circle cx="4.5" cy="4.5" r="3.6" fill="#afb1b3"/><circle cx="4.5" cy="21.5" r="3.6" fill="#afb1b3"/><circle cx="14.5" cy="8.5" r="3.6" fill="#afb1b3"/><path d="M4.5,4 V22 M4.5,17 Q14.5,16 14.5,9" fill="none" stroke="#afb1b3" stroke-width="2.6"/></svg>
<span class="t" style="left:103.30px;top:1911.80px;font-size:25px;line-height:28px;color:#bbbbbb;letter-spacing:-0.486px;">Version Control</span>
<svg class="r" style="left:316px;top:1916px;" width="20" height="17" viewBox="0 0 20 17"><rect x="0" y="0" width="4" height="3.6" fill="#afb1b3"/><rect x="6.5" y="0" width="13.5" height="3.6" fill="#afb1b3"/><rect x="0" y="6.6" width="4" height="3.6" fill="#afb1b3"/><rect x="6.5" y="6.6" width="13.5" height="3.6" fill="#afb1b3"/><rect x="0" y="13.2" width="4" height="3.6" fill="#afb1b3"/><rect x="6.5" y="13.2" width="13.5" height="3.6" fill="#afb1b3"/></svg>
<span class="t" style="left:347.30px;top:1911.80px;font-size:25px;line-height:28px;color:#bbbbbb;letter-spacing:-2.367px;">TODO</span>
<svg class="r" style="left:456px;top:1913px;" width="22" height="22" viewBox="0 0 22 22"><circle cx="11" cy="11" r="10.7" fill="#afb1b3"/><rect x="9.4" y="4.5" width="3.4" height="8.5" fill="#3c3f41"/><rect x="9.4" y="14.6" width="3.4" height="3.4" fill="#3c3f41"/></svg>
<span class="t" style="left:487.60px;top:1911.80px;font-size:25px;line-height:28px;color:#bbbbbb;letter-spacing:-1.014px;">Problems</span>
<svg class="r" style="left:631px;top:1914px;" width="22" height="20" viewBox="0 0 22 20"><rect width="22" height="20" fill="#afb1b3"/><path d="M3.5,4.5 L9,9 L3.5,13.5" fill="none" stroke="#3c3f41" stroke-width="2.2"/><rect x="10.5" y="13.5" width="7.5" height="2.2" fill="#3c3f41"/></svg>
<span class="t" style="left:663.60px;top:1911.80px;font-size:25px;line-height:28px;color:#bbbbbb;letter-spacing:-0.443px;">Terminal</span>
<svg class="r" style="left:796px;top:1913px;" width="28" height="26" viewBox="0 0 28 26"><path d="M7,0 H19 L26,12 L19,24 H7 L0,12 Z" fill="#afb1b3"/><path d="M9,5.5 L19.5,12 L9,18.5 Z" fill="#3c3f41"/><circle cx="22" cy="21" r="4.4" fill="#0a0"/><circle cx="22" cy="21" r="3.4" fill="#1ee01e"/></svg>
<span class="t" style="left:830.30px;top:1911.80px;font-size:25px;line-height:28px;color:#bbbbbb;letter-spacing:-1.829px;">Services</span>
<svg class="r" style="left:954px;top:1912px;" width="27" height="27" viewBox="0 0 27 27"><path d="M10.5,19.5 A8.6,8.6 0 1 1 19,9.5" fill="none" stroke="#afb1b3" stroke-width="2.4"/><path d="M10.5,5.5 V11.5 L7.8,14.5" fill="none" stroke="#afb1b3" stroke-width="2"/><path d="M13.5,10.5 L26,18.2 L13.5,26 Z" fill="#afb1b3"/></svg>
<span class="t" style="left:987.60px;top:1911.80px;font-size:25px;line-height:28px;color:#bbbbbb;letter-spacing:-0.586px;">Profiler</span>
<svg class="r" style="left:1102px;top:1912px;" width="27" height="26" viewBox="0 0 27 26"><path d="M1,10 L11,1 L16,1 L13,5.5 L15.5,8.5 L26.5,20.5 L22,25 L11,13 L9,11.5 L5.5,15 Z" fill="#afb1b3"/></svg>
<span class="t" style="left:1135.60px;top:1911.80px;font-size:25px;line-height:28px;color:#bbbbbb;letter-spacing:-0.525px;">Build</span>
<svg class="r" style="left:1235px;top:1912px;" width="26" height="26" viewBox="0 0 26 26"><path d="M13,0 L26,6.5 L13,13 L0,6.5 Z" fill="#afb1b3"/><path d="M2.5,11.5 L13,16.7 L23.5,11.5 L26,12.8 L13,19.5 L0,12.8 Z" fill="#afb1b3"/><path d="M2.5,17.5 L13,22.7 L23.5,17.5 L26,18.8 L13,25.5 L0,18.8 Z" fill="#afb1b3"/></svg>
<span class="t" style="left:1267.60px;top:1911.80px;font-size:25px;line-height:28px;color:#bbbbbb;letter-spacing:-1.009px;">Dependencies</span>
<svg class="r" style="left:11px;top:1953px;" width="26" height="27" viewBox="0 0 26 27"><rect x="5.5" y="1.5" width="19.5" height="19.5" fill="none" stroke="#afb1b3" stroke-width="1.8"/><path d="M1.5,5.5 V25.5 H21" fill="none" stroke="#afb1b3" stroke-width="1.8"/></svg>
<span class="t" style="left:53.60px;top:1951.20px;font-size:25px;line-height:28px;color:#bbbbbb;letter-spacing:0.195px;">Build completed successfully in 3 sec, 912 ms (20 minutes ago)</span>
<span class="t" style="left:2768.40px;top:1951.20px;font-size:25px;line-height:28px;color:#bbbbbb;letter-spacing:-0.975px;">168:1</span>
<span class="t" style="left:2854.20px;top:1951.20px;font-size:25px;line-height:28px;color:#bbbbbb;letter-spacing:-5.400px;">LF</span>
<span class="t" style="left:2904.10px;top:1951.20px;font-size:25px;line-height:28px;color:#bbbbbb;letter-spacing:-0.650px;">UTF-8</span>
<span class="t" style="left:2999.20px;top:1951.20px;font-size:25px;line-height:28px;color:#bbbbbb;letter-spacing:0.433px;">Tab*</span>
<svg class="r" style="left:3074px;top:1954px;" width="23" height="23" viewBox="0 0 23 23"><path d="M2,11 V6.5 Q2,1.5 7,1.5 Q12,1.5 12,6.5 V10" fill="none" stroke="#afb1b3" stroke-width="2.6"/><rect x="6" y="10" width="17" height="12.5" fill="#afb1b3"/></svg>
</body></html>
